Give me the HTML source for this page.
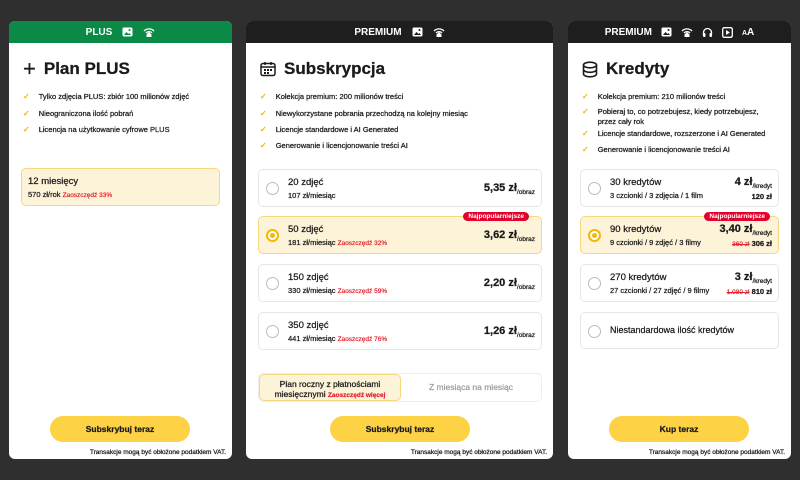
<!DOCTYPE html>
<html><head><meta charset="utf-8"><style>
*{margin:0;padding:0;box-sizing:border-box}
body{width:800px;height:480px;background:#2f2f2f;font-family:"Liberation Sans",sans-serif;color:#1a1a1a;position:relative;overflow:hidden}
.card{position:absolute;top:21px;height:438px;background:#fff;border-radius:6px;overflow:hidden;-webkit-text-stroke:0.25px #1a1a1a}
.hdr{height:22px;display:flex;align-items:center;justify-content:center;gap:10px;color:#fff;font-weight:bold;font-size:10px;-webkit-text-stroke:0}
.hdr svg{display:block}
.title{position:absolute;top:38px;left:14px;font-size:17px;font-weight:bold;display:flex;align-items:center;gap:8px}
.feat{position:absolute;left:14px;font-size:7.5px;display:flex;gap:9px;line-height:9.5px}
.feat b{color:#f4b400;font-weight:bold;font-size:8px;-webkit-text-stroke:0}
.opt{position:absolute;border:1px solid #e6e6e6;border-radius:5px;background:#fff}
.opt.sel{background:#fdf3d8;border-color:#f5d77f}
.radio{position:absolute;left:7px;top:12px;width:13px;height:13px;border-radius:50%;border:1px solid #bbb;background:#fff}
.sel .radio{border:2px solid #f5b700}
.sel .radio:after{content:"";position:absolute;left:2px;top:2px;width:5px;height:5px;border-radius:50%;background:#f5b700}
.on{position:absolute;left:29px;top:7px;font-size:9.5px}
.os{position:absolute;left:29px;top:21px;font-size:7.5px}
.red{color:#e5202e;font-size:6.5px;-webkit-text-stroke:0.2px #e5202e}
.pr{position:absolute;right:6px;top:12px;font-size:11px;font-weight:bold}
.pr small{font-size:6.5px;font-weight:normal;vertical-align:-3px}
.badge{position:absolute;right:12px;top:-5px;background:#e4002b;color:#fff;font-size:6.5px;font-weight:bold;padding:1px 5px;border-radius:6px;-webkit-text-stroke:0}
.btn{position:absolute;top:395px;width:140px;height:26px;background:#fdd245;border-radius:13px;font-size:8.5px;font-weight:bold;display:flex;align-items:center;justify-content:center}
.vat{position:absolute;right:6px;top:428px;font-size:6.5px}
</style></head><body>

<!-- Card 1 -->
<div class="card" style="left:9px;width:223px">
 <div class="hdr" style="background:#0b8a47">PLUS
  <svg width="11" height="10" viewBox="0 0 11 10"><rect x="0.5" y="0.5" width="10" height="9" rx="1.5" fill="#fff"/><path d="M2 8l2.5-3 2 2 1-1L9 8z" fill="#0b8a47"/><circle cx="7.5" cy="3" r="1" fill="#0b8a47"/></svg>
  <svg width="12" height="11" viewBox="0 0 12 11"><path d="M1 4a7 7 0 0 1 10 0M3 6a4 4 0 0 1 6 0" stroke="#fff" stroke-width="1.3" fill="none"/><path d="M6 5l-2.5 2.5V10h5V7.5z" fill="#fff"/></svg>
 </div>
 <div class="title"><span style="font-size:22px;font-weight:normal;line-height:18px">+</span>Plan PLUS</div>
 <div class="feat" style="top:71px"><b>✓</b>Tylko zdjęcia PLUS: zbiór 100 milionów zdjęć</div>
 <div class="feat" style="top:88px"><b>✓</b>Nieograniczona ilość pobrań</div>
 <div class="feat" style="top:104px"><b>✓</b>Licencja na użytkowanie cyfrowe PLUS</div>
 <div class="opt sel" style="left:12px;top:147px;width:199px;height:38px">
  <div class="on" style="left:6px">12 miesięcy</div>
  <div class="os" style="left:6px">570 zł/rok <span class="red">Zaoszczędź 33%</span></div>
 </div>
 <div class="btn" style="left:41px">Subskrybuj teraz</div>
 <div class="vat">Transakcje mogą być obłożone podatkiem VAT.</div>
</div>

<!-- Card 2 -->
<div class="card" style="left:246px;width:307px">
 <div class="hdr" style="background:#1e1e1e">PREMIUM
  <svg width="11" height="10" viewBox="0 0 11 10"><rect x="0.5" y="0.5" width="10" height="9" rx="1.5" fill="#fff"/><path d="M2 8l2.5-3 2 2 1-1L9 8z" fill="#1e1e1e"/><circle cx="7.5" cy="3" r="1" fill="#1e1e1e"/></svg>
  <svg width="12" height="11" viewBox="0 0 12 11"><path d="M1 4a7 7 0 0 1 10 0M3 6a4 4 0 0 1 6 0" stroke="#fff" stroke-width="1.3" fill="none"/><path d="M6 5l-2.5 2.5V10h5V7.5z" fill="#fff"/></svg>
 </div>
 <div class="title"><svg width="16" height="16" viewBox="0 0 16 16"><rect x="1" y="2.5" width="14" height="12" rx="2" fill="none" stroke="#1a1a1a" stroke-width="1.5"/><path d="M1 6h14M5 1v3M11 1v3" stroke="#1a1a1a" stroke-width="1.5"/><g fill="#1a1a1a"><rect x="4" y="8" width="2" height="2"/><rect x="7" y="8" width="2" height="2"/><rect x="10" y="8" width="2" height="2"/><rect x="4" y="11" width="2" height="2"/><rect x="7" y="11" width="2" height="2"/></g></svg>Subskrypcja</div>
 <div class="feat" style="top:71px"><b>✓</b>Kolekcja premium: 200 milionów treści</div>
 <div class="feat" style="top:88px"><b>✓</b>Niewykorzystane pobrania przechodzą na kolejny miesiąc</div>
 <div class="feat" style="top:104px"><b>✓</b>Licencje standardowe i AI Generated</div>
 <div class="feat" style="top:120px"><b>✓</b>Generowanie i licencjonowanie treści AI</div>
 <div class="opt" style="left:12px;top:148px;width:284px;height:38px"><div class="radio"></div><div class="on">20 zdjęć</div><div class="os">107 zł/miesiąc</div><div class="pr">5,35 zł<small>/obraz</small></div></div>
 <div class="opt sel" style="left:12px;top:195px;width:284px;height:38px"><div class="badge">Najpopularniejsze</div><div class="radio"></div><div class="on">50 zdjęć</div><div class="os">181 zł/miesiąc <span class="red">Zaoszczędź 32%</span></div><div class="pr">3,62 zł<small>/obraz</small></div></div>
 <div class="opt" style="left:12px;top:243px;width:284px;height:38px"><div class="radio"></div><div class="on">150 zdjęć</div><div class="os">330 zł/miesiąc <span class="red">Zaoszczędź 59%</span></div><div class="pr">2,20 zł<small>/obraz</small></div></div>
 <div class="opt" style="left:12px;top:291px;width:284px;height:38px"><div class="radio"></div><div class="on">350 zdjęć</div><div class="os">441 zł/miesiąc <span class="red">Zaoszczędź 76%</span></div><div class="pr">1,26 zł<small>/obraz</small></div></div>
 <div style="position:absolute;left:12px;top:352px;width:284px;height:29px;border:1px solid #eee;border-radius:5px;display:flex">
  <div style="width:142px;background:#fdf3d8;border:1px solid #f5d77f;border-radius:5px;font-size:8.5px;text-align:center;line-height:10px;padding-top:4px">Plan roczny z płatnościami<br>miesięcznymi <span class="red" style="font-weight:bold">Zaoszczędź więcej</span></div>
  <div style="flex:1;color:#999;-webkit-text-stroke:0.2px #999;font-size:8.5px;text-align:center;line-height:27px">Z miesiąca na miesiąc</div>
 </div>
 <div class="btn" style="left:84px">Subskrybuj teraz</div>
 <div class="vat">Transakcje mogą być obłożone podatkiem VAT.</div>
</div>

<!-- Card 3 -->
<div class="card" style="left:568px;width:223px">
 <div class="hdr" style="background:#1e1e1e;gap:9px">PREMIUM
  <svg width="11" height="10" viewBox="0 0 11 10"><rect x="0.5" y="0.5" width="10" height="9" rx="1.5" fill="#fff"/><path d="M2 8l2.5-3 2 2 1-1L9 8z" fill="#1e1e1e"/><circle cx="7.5" cy="3" r="1" fill="#1e1e1e"/></svg>
  <svg width="12" height="11" viewBox="0 0 12 11"><path d="M1 4a7 7 0 0 1 10 0M3 6a4 4 0 0 1 6 0" stroke="#fff" stroke-width="1.3" fill="none"/><path d="M6 5l-2.5 2.5V10h5V7.5z" fill="#fff"/></svg>
  <svg width="11" height="11" viewBox="0 0 11 11"><path d="M1.5 8V5.5a4 4 0 0 1 8 0V8" stroke="#fff" stroke-width="1.3" fill="none"/><rect x="1" y="6" width="2.5" height="4" rx="1" fill="#fff"/><rect x="7.5" y="6" width="2.5" height="4" rx="1" fill="#fff"/></svg>
  <svg width="11" height="11" viewBox="0 0 11 11"><rect x="0.7" y="0.7" width="9.6" height="9.6" rx="1.5" fill="none" stroke="#fff" stroke-width="1.3"/><path d="M4 3l4 2.5L4 8z" fill="#fff"/></svg>
  <span style="font-size:10px"><span style="font-size:7px">A</span>A</span>
 </div>
 <div class="title"><svg width="16" height="17" viewBox="0 0 16 17"><g fill="none" stroke="#1a1a1a" stroke-width="1.6"><ellipse cx="8" cy="4" rx="6.5" ry="2.8"/><path d="M1.5 4v4.5c0 1.5 3 2.8 6.5 2.8s6.5-1.3 6.5-2.8V4M1.5 8.5V13c0 1.5 3 2.8 6.5 2.8s6.5-1.3 6.5-2.8V8.5"/></g></svg>Kredyty</div>
 <div class="feat" style="top:71px"><b>✓</b>Kolekcja premium: 210 milionów treści</div>
 <div class="feat" style="top:86px"><b>✓</b><span>Pobieraj to, co potrzebujesz, kiedy potrzebujesz,<br>przez cały rok</span></div>
 <div class="feat" style="top:108px"><b>✓</b>Licencje standardowe, rozszerzone i AI Generated</div>
 <div class="feat" style="top:124px"><b>✓</b>Generowanie i licencjonowanie treści AI</div>
 <div class="opt" style="left:12px;top:148px;width:199px;height:38px"><div class="radio"></div><div class="on">30 kredytów</div><div class="os">3 czcionki / 3 zdjęcia / 1 film</div><div class="pr" style="top:6px">4 zł<small>/kredyt</small></div><div style="position:absolute;right:6px;top:22px;font-size:7.5px;font-weight:bold">120 zł</div></div>
 <div class="opt sel" style="left:12px;top:195px;width:199px;height:38px"><div class="badge" style="right:8px">Najpopularniejsze</div><div class="radio"></div><div class="on">90 kredytów</div><div class="os">9 czcionki / 9 zdjęć / 3 filmy</div><div class="pr" style="top:6px">3,40 zł<small>/kredyt</small></div><div style="position:absolute;right:6px;top:22px;font-size:7.5px;font-weight:bold"><s class="red" style="font-weight:normal">360 zł</s> 306 zł</div></div>
 <div class="opt" style="left:12px;top:243px;width:199px;height:38px"><div class="radio"></div><div class="on">270 kredytów</div><div class="os">27 czcionki / 27 zdjęć / 9 filmy</div><div class="pr" style="top:6px">3 zł<small>/kredyt</small></div><div style="position:absolute;right:6px;top:22px;font-size:7.5px;font-weight:bold"><s class="red" style="font-weight:normal">1.080 zł</s> 810 zł</div></div>
 <div class="opt" style="left:12px;top:291px;width:199px;height:37px"><div class="radio"></div><div class="on" style="top:12px;font-size:9px">Niestandardowa ilość kredytów</div></div>
 <div class="btn" style="left:41px">Kup teraz</div>
 <div class="vat">Transakcje mogą być obłożone podatkiem VAT.</div>
</div>
</body></html>
